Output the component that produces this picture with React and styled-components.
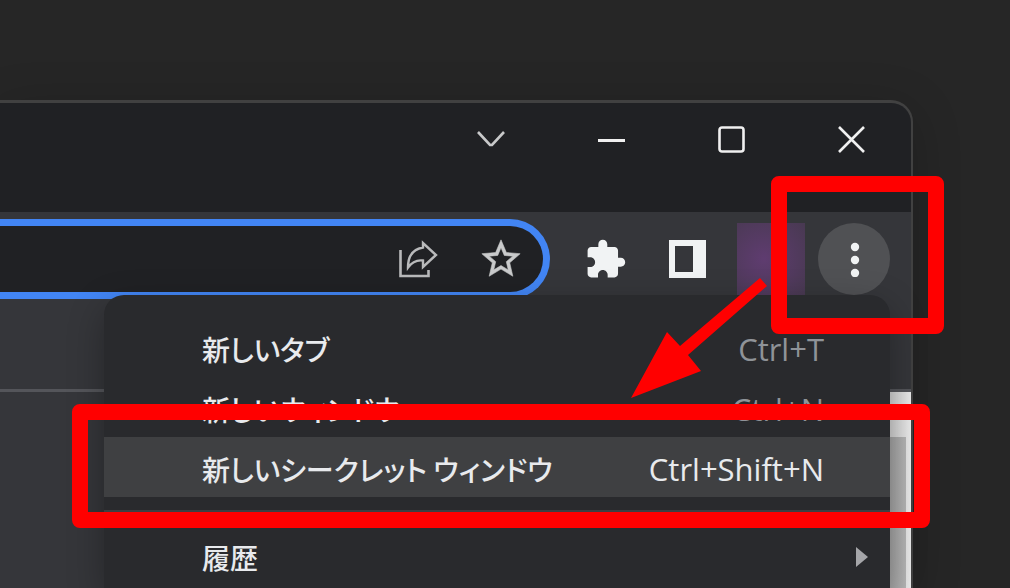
import React from 'react';
import styled, { createGlobalStyle } from 'styled-components';

const GlobalStyle = createGlobalStyle`
  * {
    box-sizing: border-box;
  }

  body {
    margin: 0;
    overflow: hidden;
    background: #262626;
    color: #e8eaed;
    font-family: 'Open Sans', 'Noto Sans CJK JP', sans-serif;
  }

  button {
    padding: 0;
    border: 0;
    background: none;
    color: inherit;
    font: inherit;
  }
`;

const Desktop = styled.main`
  position: relative;
  display: flex;
  height: 100vh;
  padding: 100px 97px 0 0;
  overflow: hidden;
`;

const BrowserWindow = styled.section`
  position: relative;
  display: flex;
  flex: 1;
  flex-direction: column;
  min-width: 0;
  border: solid #414141;
  border-width: 3px 2px 0 0;
  border-radius: 0 22px 0 0;
  background: #35363a;
  box-shadow: 0 10px 50px rgba(0, 0, 0, 0.2);
`;

const TitleBar = styled.header`
  display: flex;
  justify-content: flex-end;
  height: 109px;
  border-radius: 0 20px 0 0;
  background: #202124;
`;

const WindowButton = styled.button`
  display: grid;
  place-items: center;
  width: 120px;
  height: 72px;
`;

const Toolbar = styled.div`
  display: flex;
  align-items: flex-start;
  gap: 11px;
  height: 180px;
  padding: 7px 21px 0 0;
  border-bottom: 3px solid #54555a;
`;

const AddressBar = styled.div`
  display: flex;
  flex: 1;
  align-items: center;
  gap: 11px;
  min-width: 0;
  height: 80px;
  margin-right: 8px;
  padding-right: 6px;
  border: solid #4285f4;
  border-width: 7px 7px 7px 0;
  border-radius: 0 40px 40px 0;
  background: #202124;
`;

const AddressInput = styled.input`
  flex: 1;
  min-width: 0;
  border: 0;
  outline: 0;
  background: transparent;
  color: inherit;
  font-size: 31px;
`;

const ToolButton = styled.button`
  display: grid;
  flex: none;
  place-items: center;
  width: 72px;
  height: ${({ $inset }) => ($inset ? '66px' : '80px')};
`;

const Avatar = styled.button`
  flex: none;
  width: 72px;
  height: 80px;

  &::before {
    content: '';
    display: block;
    width: 68px;
    height: 72px;
    margin: 0 auto;
    background: radial-gradient(circle at 40% 50%, #5f3c70, #483951 100%);
  }
`;

const MoreButton = styled.button`
  display: grid;
  flex: none;
  place-items: center;
  width: 72px;
  height: 72px;
  margin-top: 4px;
  border-radius: 50%;
  background: #505154;
`;

const Page = styled.div`
  display: flex;
  flex: 1;
  justify-content: flex-end;
`;

const ScrollTrack = styled.div`
  width: 21px;
  padding: 45px 5px 0 0;
  background: linear-gradient(to right, #cfcfcf, #ececec);
`;

const ScrollThumb = styled.div`
  height: 100%;
  background: linear-gradient(to right, #a2a2a2, #b6b6b6);
`;

const Menu = styled.div`
  position: absolute;
  top: 192px;
  right: 21px;
  bottom: 0;
  width: 786px;
  padding-top: 22px;
  border-radius: 20px 20px 0 0;
  background: #292a2d;
  box-shadow: 0 12px 36px rgba(0, 0, 0, 0.3);
`;

const MenuItem = styled.button`
  display: flex;
  align-items: center;
  width: 100%;
  height: 60px;
  padding: 4px 21px 0 98px;
  background: ${({ $active }) => ($active ? '#3f4042' : 'transparent')};
  font-size: 31px;
  line-height: 40px;
  text-align: left;
`;

const Label = styled.span`
  flex: 1;
  font-family: 'Noto Sans CJK JP', sans-serif;
  font-size: 28px;
  font-weight: 500;
  font-feature-settings: 'palt';
`;

const Shortcut = styled.span`
  color: ${({ $active }) => ($active ? '#e8eaed' : '#8f9398')};
`;

const ArrowSlot = styled.span`
  display: flex;
  justify-content: flex-end;
  width: 45px;
`;

const Separator = styled.hr`
  height: 3px;
  margin: 13px 0 12px;
  border: 0;
  background: #3c4043;
`;

const Frame = styled.div`
  position: absolute;
  top: ${({ $top }) => $top}px;
  left: ${({ $left }) => $left}px;
  width: ${({ $width }) => $width}px;
  height: ${({ $height }) => $height}px;
  border: 16px solid #ff0000;
  border-radius: 8px;
  pointer-events: none;
`;

const Pointer = styled.svg`
  position: absolute;
  top: 276px;
  left: 628px;
  pointer-events: none;
`;

const items = [
  { label: '新しいタブ', shortcut: 'Ctrl+T' },
  { label: '新しいウィンドウ', shortcut: 'Ctrl+N' },
  { label: '新しいシークレット ウィンドウ', shortcut: 'Ctrl+Shift+N', active: true },
];

const windowIcons = [
  { name: 'タブを検索', shape: <path d="M2 9l12 13h2L28 9" stroke="#c8c9ca" /> },
  { name: '最小化', shape: <path d="M2 17.5h27" strokeWidth="3" /> },
  { name: '最大化', shape: <rect x="3.5" y="4.5" width="24" height="24" rx="2.5" /> },
  { name: '閉じる', shape: <path d="M3 4l25 25M28 4L3 29" /> },
];

const ShareIcon = () => (
  <svg width="42" height="40" viewBox="0 0 42 40" fill="none" stroke="#b9babb" strokeWidth="2.6">
    <path d="M3.5 11v26h28v-6" />
    <path
      d="M11 28.500C11 17 16 10 26 8.500V4L39 16 26 28v-6.500C19 20.500 15 23 11 28.500z"
      strokeWidth="2.4"
    />
  </svg>
);

const StarIcon = () => (
  <svg width="46" height="46" viewBox="0 0 24 24" fill="#c9cacb" stroke="#c9cacb" strokeWidth="0.3">
    <path d="M22 9.240l-7.190-.620L12 2 9.190 8.630 2 9.240l5.460 4.730L5.820 21 12 17.270 18.180 21l-1.630-7.030L22 9.240zM12 15.400l-3.760 2.270 1-4.280-3.320-2.880 4.380-.380L12 6.100l1.710 4.040 4.380.380-3.320 2.880 1 4.280L12 15.400z" />
  </svg>
);

const PuzzleIcon = () => (
  <svg width="43" height="43" viewBox="0 0 24 24" fill="#f1f3f4">
    <path d="M20.500 11H19V7c0-1.100-.900-2-2-2h-4V3.500C13 2.120 11.880 1 10.500 1S8 2.120 8 3.500V5H4c-1.100 0-1.990.900-1.990 2v3.800H3.500c1.490 0 2.700 1.210 2.700 2.700s-1.210 2.700-2.700 2.700H2V20c0 1.100.900 2 2 2h3.800v-1.500c0-1.490 1.210-2.700 2.700-2.700 1.490 0 2.700 1.210 2.700 2.700V22H17c1.100 0 2-.900 2-2v-4h1.500c1.380 0 2.500-1.120 2.500-2.500S21.880 11 20.500 11z" />
  </svg>
);

const SidePanelIcon = () => (
  <svg width="38" height="38" viewBox="0 0 38 38" fill="#f1f3f4">
    <path fillRule="evenodd" d="M0 0h37v38H0zM6 6v26h18V6z" />
  </svg>
);

const App = () => (
  <>
    <GlobalStyle />
    <Desktop>
      <BrowserWindow>
        <TitleBar>
          {windowIcons.map(({ name, shape }) => (
            <WindowButton key={name} aria-label={name}>
              <svg width="31" height="33" fill="none" stroke="#f0f0f0" strokeWidth="2.6">
                {shape}
              </svg>
            </WindowButton>
          ))}
        </TitleBar>

        <Toolbar>
          <AddressBar>
            <AddressInput aria-label="アドレスバー" />
            <ToolButton $inset aria-label="共有">
              <ShareIcon />
            </ToolButton>
            <ToolButton $inset aria-label="ブックマーク">
              <StarIcon />
            </ToolButton>
          </AddressBar>
          <ToolButton aria-label="拡張機能">
            <PuzzleIcon />
          </ToolButton>
          <ToolButton aria-label="サイドパネル">
            <SidePanelIcon />
          </ToolButton>
          <Avatar aria-label="プロフィール" />
          <MoreButton aria-label="メニュー" aria-expanded="true">
            <svg width="12" height="36" fill="#f1f3f4">
              <circle cx="7" cy="6" r="4.200" />
              <circle cx="7" cy="19" r="4.200" />
              <circle cx="7" cy="32" r="4.200" />
            </svg>
          </MoreButton>
        </Toolbar>

        <Page>
          <ScrollTrack>
            <ScrollThumb />
          </ScrollTrack>
        </Page>

        <Menu role="menu">
          {items.map(({ label, shortcut, active }) => (
            <MenuItem key={label} role="menuitem" $active={active}>
              <Label>{label}</Label>
              <Shortcut $active={active}>{shortcut}</Shortcut>
              <ArrowSlot />
            </MenuItem>
          ))}
          <Separator />
          <MenuItem role="menuitem" aria-haspopup="menu">
            <Label>履歴</Label>
            <ArrowSlot>
              <svg width="14" height="22" fill="#a5a6a9">
                <path d="M1 1l12 10L1 21z" />
              </svg>
            </ArrowSlot>
          </MenuItem>
        </Menu>
      </BrowserWindow>

      <Frame $top={176} $left={771} $width={173} $height={158} />
      <Frame $top={404} $left={72} $width={858} $height={124} />
      <Pointer width="144" height="128" fill="#ff0000">
        <path d="M132 2l7 8L60 79l13 16L3 122 39 56l13 14z" />
      </Pointer>
    </Desktop>
  </>
);

export default App;
